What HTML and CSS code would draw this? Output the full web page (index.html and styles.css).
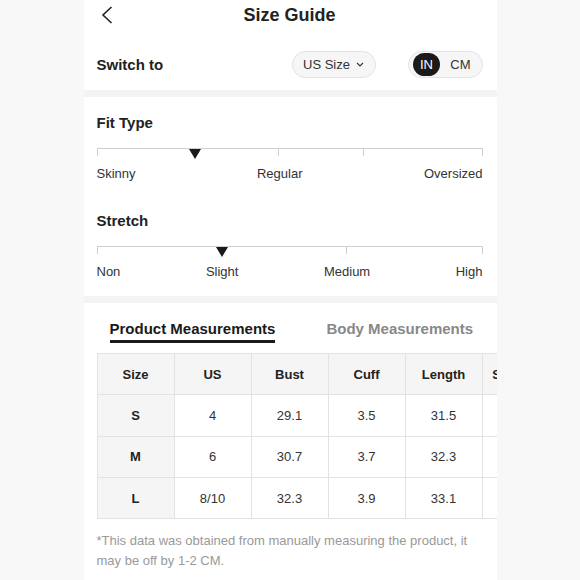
FILE: index.html
```html
<!DOCTYPE html>
<html lang="en">
<head>
<meta charset="utf-8">
<title>Size Guide</title>
<link rel="stylesheet" href="styles.css">
</head>
<body>
<div class="page">
  <section class="card top">
    <header class="header">
      <span class="back" aria-label="Back">
        <svg width="12" height="18" viewBox="0 0 12 18"><path d="M10.5 1 L2 9 L10.5 17" fill="none" stroke="#222" stroke-width="1.6"/></svg>
      </span>
      <h1 class="title">Size Guide</h1>
    </header>
    <div class="switch-row">
      <span class="switch-label">Switch to</span>
      <div class="switch-controls">
        <div class="select">US Size
          <svg width="8" height="5" viewBox="0 0 8 5"><path d="M1 1 L4 4 L7 1" fill="none" stroke="#333" stroke-width="1.1"/></svg>
        </div>
        <div class="toggle">
          <span class="opt active">IN</span>
          <span class="opt">CM</span>
        </div>
      </div>
    </div>
  </section>

  <section class="card fit">
    <div class="scale-block">
      <h2 class="scale-title">Fit Type</h2>
      <div class="track">
        <span class="tick" style="left:0"></span>
        <span class="tick" style="left:47.4%"></span>
        <span class="tick" style="left:69.2%"></span>
        <span class="tick" style="left:100%"></span>
        <span class="marker" style="left:25.6%"></span>
      </div>
      <div class="scale-labels">
        <span>Skinny</span><span>Regular</span><span>Oversized</span>
      </div>
    </div>
    <div class="scale-block">
      <h2 class="scale-title">Stretch</h2>
      <div class="track">
        <span class="tick" style="left:0"></span>
        <span class="tick" style="left:65%"></span>
        <span class="tick" style="left:100%"></span>
        <span class="marker" style="left:32.4%"></span>
      </div>
      <div class="scale-labels">
        <span>Non</span><span>Slight</span><span>Medium</span><span>High</span>
      </div>
    </div>
  </section>

  <section class="card measure">
    <nav class="tabs">
      <span class="tab active">Product Measurements</span>
      <span class="tab">Body Measurements</span>
    </nav>
    <div class="table-wrap">
      <table class="sizes">
        <thead>
          <tr><th>Size</th><th>US</th><th>Bust</th><th>Cuff</th><th>Length</th><th>Shoulder</th></tr>
        </thead>
        <tbody>
          <tr><th>S</th><td>4</td><td>29.1</td><td>3.5</td><td>31.5</td><td>14.2</td></tr>
          <tr><th>M</th><td>6</td><td>30.7</td><td>3.7</td><td>32.3</td><td>14.6</td></tr>
          <tr><th>L</th><td>8/10</td><td>32.3</td><td>3.9</td><td>33.1</td><td>15.0</td></tr>
        </tbody>
      </table>
    </div>
    <p class="note">*This data was obtained from manually measuring the product, it may be off by 1-2 CM.</p>
  </section>
</div>
</body>
</html>
```
FILE: styles.css
```css
* { box-sizing: border-box; }
html, body { margin: 0; padding: 0; }
body {
  background: #f8f8f8;
  font-family: "Liberation Sans", Arial, sans-serif;
  color: #222;
  display: flex;
  justify-content: center;
  height: 580px;
  overflow: hidden;
}
.page {
  width: 413px;
  min-height: 580px;
  display: flex;
  flex-direction: column;
  gap: 7px;
  background: #f3f3f3;
}
.card {
  background: #fff;
  padding: 0 14px 0 13px;
}
.top { padding-bottom: 12px; }
.header {
  position: relative;
  height: 30px;
  display: flex;
  align-items: center;
  justify-content: center;
}
.back {
  position: absolute;
  left: 4px;
  top: 6px;
  display: flex;
}
.title {
  margin: 0;
  font-size: 18px;
  font-weight: bold;
  color: #222;
}
.switch-row {
  margin-top: 21px;
  display: flex;
  align-items: center;
  justify-content: space-between;
}
.switch-label {
  font-size: 15px;
  font-weight: bold;
  color: #222;
}
.switch-controls {
  display: flex;
  gap: 32px;
  align-items: center;
}
.select {
  width: 84px;
  height: 27px;
  border: 1px solid #e2e2e2;
  background: #f6f6f6;
  border-radius: 14px;
  display: flex;
  align-items: center;
  justify-content: center;
  gap: 6px;
  font-size: 13px;
  color: #333;
}
.toggle {
  width: 75px;
  height: 27px;
  border: 1px solid #e4e4e4;
  background: #f6f6f6;
  border-radius: 14px;
  display: flex;
  align-items: center;
  padding: 0 4px;
  gap: 3px;
}
.opt {
  height: 23px;
  padding: 0 7px;
  display: flex;
  align-items: center;
  font-size: 13px;
  color: #333;
  border-radius: 12px;
}
.opt.active {
  background: #1a1a1a;
  color: #fff;
  width: 33px;
  justify-content: center;
  padding: 0;
}
.fit { padding-top: 16px; }
.scale-block { padding-bottom: 12px; }
.scale-block + .scale-block { padding-bottom: 15px; }
.scale-title {
  margin: 0;
  font-size: 15px;
  font-weight: bold;
  line-height: 20px;
  color: #222;
}
.track {
  position: relative;
  margin-top: 15px;
  height: 17px;
  border-top: 1px solid #cfcfcf;
}
.tick {
  position: absolute;
  top: 0;
  width: 1px;
  height: 7px;
  background: #cfcfcf;
  margin-left: -1px;
}
.tick:first-child { margin-left: 0; }
.marker {
  position: absolute;
  top: 0;
  width: 0;
  height: 0;
  margin-left: -6px;
  border-left: 6px solid transparent;
  border-right: 6px solid transparent;
  border-top: 10px solid #1a1a1a;
}
.scale-labels {
  display: flex;
  justify-content: space-between;
  font-size: 13px;
  line-height: 18px;
  color: #333;
}
.fit .scale-block:first-child .scale-labels { margin-bottom: 16px; }
.measure { padding-top: 17px; flex: 1; }
.tabs {
  display: flex;
  gap: 51px;
  padding-left: 13px;
}
.tab {
  font-size: 15px;
  font-weight: bold;
  color: #888;
  line-height: 18px;
  padding-bottom: 2px;
}
.tab.active {
  color: #1a1a1a;
  border-bottom: 3px solid #1a1a1a;
}
.table-wrap {
  margin-top: 10px;
  margin-right: -14px;
  overflow: hidden;
}
.sizes {
  border-collapse: collapse;
  table-layout: fixed;
  width: 462px;
  font-size: 13px;
}
.sizes th, .sizes td {
  width: 77px;
  height: 41.3px;
  border: 1px solid #e2e2e2;
  text-align: center;
  color: #222;
  padding: 0;
}
.sizes thead th { background: #f5f5f5; font-weight: bold; }
.sizes tbody th { background: #f5f5f5; font-weight: bold; }
.sizes td { color: #333; }
.note {
  margin: 12px 0 0;
  font-size: 13px;
  line-height: 20px;
  color: #999;
}
```
